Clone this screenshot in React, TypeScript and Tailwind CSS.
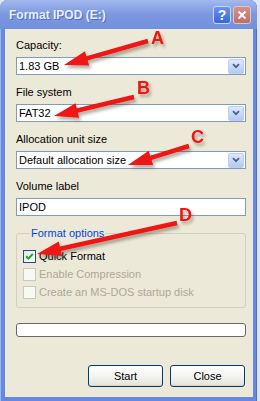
import React from "react";

type Pt = [number, number];

function arrowPoints(x1: number, y1: number, x2: number, y2: number, shaft = 2.3, headW = 7.5, headL = 24): string {
  const dx = x2 - x1;
  const dy = y2 - y1;
  const len = Math.hypot(dx, dy);
  const ux = dx / len;
  const uy = dy / len;
  const px = -uy;
  const py = ux;
  const bx = x2 - ux * headL;
  const by = y2 - uy * headL;
  const pts: Pt[] = [
    [x1 + px * shaft, y1 + py * shaft],
    [bx + px * shaft, by + py * shaft],
    [bx + px * headW, by + py * headW],
    [x2, y2],
    [bx - px * headW, by - py * headW],
    [bx - px * shaft, by - py * shaft],
    [x1 - px * shaft, y1 - py * shaft],
  ];
  return pts.map((p) => `${p[0].toFixed(1)},${p[1].toFixed(1)}`).join(" ");
}

const arrows = [
  { from: [148, 41] as Pt, to: [64, 65] as Pt, letter: "A", lx: 151, ly: 44 },
  { from: [134, 97] as Pt, to: [54, 116] as Pt, letter: "B", lx: 137, ly: 94 },
  { from: [189, 146] as Pt, to: [128, 165] as Pt, letter: "C", lx: 191, ly: 143 },
  { from: [177, 223] as Pt, to: [37, 254] as Pt, letter: "D", lx: 179, ly: 221 },
];

function Combo({ value }: { value: string }) {
  return (
    <div className="mt-[5px] flex h-[18px] items-center border border-[#7f9db9] bg-white">
      <span className="flex-1 pl-[2px] text-[11px] leading-[13px] text-black">{value}</span>
      <div className="mr-[1px] flex h-[15px] w-[16px] items-center justify-center rounded-[2px] border border-[#bccef8] bg-gradient-to-b from-[#dde8fe] to-[#b4c9f6]">
        <svg width="8" height="6" viewBox="0 0 8 6">
          <path d="M1 1.2 L4 4.2 L7 1.2" stroke="#4d6185" strokeWidth="1.8" fill="none" />
        </svg>
      </div>
    </div>
  );
}

function Label({ children, first }: { children: React.ReactNode; first?: boolean }) {
  return (
    <div className={first ? "text-[11px] leading-[13px] text-black" : "mt-[11px] text-[11px] leading-[13px] text-black"}>
      {children}
    </div>
  );
}

function Check({ label, checked, disabled }: { label: string; checked?: boolean; disabled?: boolean }) {
  return (
    <div className="flex h-[18px] items-center gap-[3px]">
      {checked ? (
        <div className="flex h-[13px] w-[13px] items-center justify-center border border-[#1c5180] bg-gradient-to-br from-[#e6e6e0] to-white">
          <svg width="9" height="9" viewBox="0 0 9 9">
            <path d="M1.2 4.2 L3.5 6.6 L7.8 1.8" stroke="#21a121" strokeWidth="2" fill="none" />
          </svg>
        </div>
      ) : (
        <div className="h-[13px] w-[13px] border border-[#cac8bb] bg-[#f8f8f4]" />
      )}
      <span className={disabled ? "text-[11px] leading-[13px] text-[#aca899]" : "text-[11px] leading-[13px] text-black"}>
        {label}
      </span>
    </div>
  );
}

function Button({ children }: { children: React.ReactNode }) {
  return (
    <div className="flex h-[22px] w-[75px] items-center justify-center rounded-[3px] border border-[#003c74] bg-gradient-to-b from-white via-[#f4f4f0] to-[#e3e3dc] text-[11px] leading-[13px] text-black shadow-[inset_0_-1px_0_#d6d0c5]">
      {children}
    </div>
  );
}

export default function App() {
  return (
    <div className="relative h-[401px] w-[260px] overflow-hidden bg-[#dfe5f4] font-['Liberation_Sans',Arial,sans-serif]">
      <div className="flex h-[401px] w-[257px] flex-col overflow-hidden rounded-t-[8px] bg-[#6687e2] shadow-[inset_1px_0_0_#a2b5ee,inset_-1px_0_0_#4b6ccf]">
        {/* title bar */}
        <div className="flex h-[29px] shrink-0 items-center bg-gradient-to-b from-[#a3b8ee] via-[#7c97e0] to-[#7190dc] pl-[9px] pr-[6px]">
          <span className="flex-1 text-[12px] font-bold leading-[14px] text-[#e9eefb] [text-shadow:1px_1px_0_#4f6cc0]">
            Format IPOD (E:)
          </span>
          <div className="flex gap-[2px]">
            <div className="flex h-[18px] w-[18px] items-center justify-center rounded-[3px] border border-[#c9d6f6] bg-gradient-to-b from-[#6a91ee] to-[#3a67d9] text-[14px] font-bold leading-[14px] text-white">
              ?
            </div>
            <div className="flex h-[18px] w-[18px] items-center justify-center rounded-[3px] border border-[#e2c3c3] bg-gradient-to-b from-[#d69088] to-[#bd6e66]">
              <svg width="10" height="10" viewBox="0 0 10 10">
                <path d="M1.5 1.5 L8.5 8.5 M8.5 1.5 L1.5 8.5" stroke="white" strokeWidth="2" />
              </svg>
            </div>
          </div>
        </div>
        {/* body */}
        <div className="mb-[4px] ml-[5px] mr-[4px] flex flex-1 flex-col bg-[#ece9d8] pb-[4px] pl-[11px] pr-[7px] pt-[10px]">
          <Label first>Capacity:</Label>
          <Combo value="1.83 GB" />
          <Label>File system</Label>
          <Combo value="FAT32" />
          <Label>Allocation unit size</Label>
          <Combo value="Default allocation size" />
          <Label>Volume label</Label>
          <div className="mt-[5px] flex h-[18px] items-center border border-[#7f9db9] bg-white pl-[2px] text-[11px] leading-[13px] text-black">
            IPOD
          </div>
          <fieldset className="mt-[11px] rounded-[3px] border border-[#d0d0bf] pb-[6px] pl-[6px]">
            <legend className="ml-[7px] px-[1px] text-[11px] leading-[13px] text-[#0046d5]">Format options</legend>
            <div className="mt-[7px] flex flex-col">
              <Check label="Quick Format" checked />
              <Check label="Enable Compression" disabled />
              <Check label="Create an MS-DOS startup disk" disabled />
            </div>
          </fieldset>
          <div className="mt-[15px] h-[14px] rounded-[3px] border border-[#686868] bg-white" />
          <div className="mt-[28px] flex justify-end gap-[7px] pr-[1px]">
            <Button>Start</Button>
            <Button>Close</Button>
          </div>
        </div>
      </div>

      {/* annotation overlay */}
      <svg className="pointer-events-none absolute left-0 top-0" width="260" height="401" viewBox="0 0 260 401">
        <defs>
          <filter id="sh" x="-20%" y="-40%" width="150%" height="180%">
            <feDropShadow dx="2" dy="3" stdDeviation="1.4" floodColor="#3c3c28" floodOpacity="0.4" />
          </filter>
        </defs>
        {arrows.map((a) => (
          <g key={a.letter} filter="url(#sh)">
            <polygon points={arrowPoints(a.from[0], a.from[1], a.to[0], a.to[1])} fill="#f01212" />
            <text x={a.lx} y={a.ly} fontFamily="Liberation Sans, Arial, sans-serif" fontWeight="bold" fontSize="18" fill="#f01212">
              {a.letter}
            </text>
          </g>
        ))}
      </svg>
    </div>
  );
}
